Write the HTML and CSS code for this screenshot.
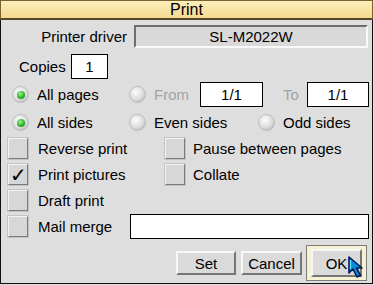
FILE: index.html
```html
<!DOCTYPE html>
<html>
<head>
  <title>Print</title>
  <link rel="stylesheet" href="styles.css">
</head>
<body>

  <div class="window">
    <div class="titlebar">Print</div>

    <div class="content">
      <div class="row driver-row">
        <span class="driver-label">Printer driver</span>
        <div class="driver-field">SL-M2022W</div>
      </div>

      <div class="row copies-row">
        <span class="copies-label">Copies</span>
        <div class="writable copies-box">1</div>
      </div>

      <div class="row radio-row">
        <div class="cell c1"><span class="radio on"></span>All pages</div>
        <div class="cell c2-pages"><span class="radio"></span><span class="faded">From</span></div>
        <div class="writable range-box">1/1</div>
        <div class="cell to-cell"><span class="faded">To</span></div>
        <div class="writable range-box to-box">1/1</div>
      </div>

      <div class="row radio-row">
        <div class="cell c1"><span class="radio on"></span>All sides</div>
        <div class="cell c2-sides"><span class="radio"></span>Even sides</div>
        <div class="cell"><span class="radio"></span>Odd sides</div>
      </div>

      <div class="row check-row">
        <div class="cell k1"><span class="check"></span>Reverse print</div>
        <div class="cell k2"><span class="check"></span>Pause between pages</div>
      </div>
      <div class="row check-row">
        <div class="cell k1"><span class="check ticked">✓</span>Print pictures</div>
        <div class="cell k2"><span class="check"></span>Collate</div>
      </div>
      <div class="row check-row">
        <div class="cell k1"><span class="check"></span>Draft print</div>
      </div>
      <div class="row check-row">
        <div class="cell k1 merge-cell"><span class="check"></span>Mail merge</div>
        <div class="writable merge-box"></div>
      </div>

      <div class="row button-row">
        <button class="btn set-btn">Set</button>
        <button class="btn cancel-btn">Cancel</button>
        <div class="default-ring">
          <button class="btn ok-btn">OK</button>
        </div>
      </div>
    </div>

    <svg class="pointer" width="18" height="24" viewBox="0 0 18 24">
      <polygon points="2,1 2,17 6,13 10,21 13.5,19.5 9.5,12 15,12" fill="#0a8fd6" stroke="#001a5c" stroke-width="1.6" stroke-linejoin="round"/>
      <polyline points="3.5,4 3.5,13" stroke="#6fe0ff" stroke-width="1.2"/>
    </svg>
  </div>

</body>
</html>
```

FILE: styles.css
```css
body {
  margin: 0;
  font-family: "Liberation Sans", Arial, sans-serif;
  font-size: 15px;
  color: #000;
  background: #dcdcdc;
}
.window {
  position: relative;
  width: 373px;
  height: 284px;
  box-sizing: border-box;
  border: 1px solid #111;
  border-top: none;
  background: #dedede;
}
.titlebar {
  height: 17px;
  margin: 0 -1px;
  border: 1px solid #7a6330;
  border-bottom: 2px solid #55472a;
  background: linear-gradient(#fdeebb, #f6da90);
  text-align: center;
  line-height: 18px;
  font-size: 16px;
}
.content {
  display: flex;
  flex-direction: column;
}
.row {
  display: flex;
  align-items: center;
}
.cell {
  display: flex;
  align-items: center;
  white-space: nowrap;
}
.writable {
  box-sizing: border-box;
  height: 25px;
  background: #fff;
  border: 1px solid #000;
  display: flex;
  align-items: center;
  justify-content: center;
}

/* printer driver */
.driver-row {
  margin-top: 5px;
  height: 23px;
}
.driver-label {
  width: 126px;
  text-align: right;
  margin-right: 7px;
}
.driver-field {
  box-sizing: border-box;
  width: 234px;
  height: 23px;
  border: 2px solid #fafafa;
  border-top-color: #6e6e6e;
  border-left-color: #6e6e6e;
  background: #d9d9d9;
  text-align: center;
  line-height: 19px;
}

/* copies */
.copies-row {
  margin-top: 6px;
  height: 25px;
  padding-left: 18px;
}
.copies-label {
  width: 52px;
}
.copies-box {
  width: 37px;
}

/* radios */
.radio-row {
  margin-top: 3px;
  height: 25px;
  padding-left: 11px;
}
.radio {
  position: relative;
  box-sizing: border-box;
  width: 17px;
  height: 17px;
  border-radius: 50%;
  margin-right: 8px;
  border: 1px solid #bcbcbc;
  background: radial-gradient(circle at 40% 35%, #fdfdfd 0%, #dcdcdc 55%, #a2a2a2 100%);
}
.radio.on::after {
  content: "";
  position: absolute;
  left: 3.5px;
  top: 3.5px;
  width: 8px;
  height: 8px;
  border-radius: 50%;
  background: radial-gradient(circle at 40% 35%, #9cf58a 0%, #2db52d 55%, #177017 100%);
}
.c1 {
  width: 117px;
}
.c2-pages {
  width: 71px;
}
.c2-sides {
  width: 129px;
}
.c2-pages .radio,
.c2-sides .radio,
.c2-sides + .cell .radio {
  margin-right: 8px;
}
.faded {
  color: #a3a3a3;
}
.range-box {
  width: 63px;
}
.to-cell {
  margin-left: 20px;
  width: 24px;
}
.to-box {
  width: 62px;
}

/* checkboxes */
.check-row {
  height: 26px;
  padding-left: 7px;
}
.check {
  box-sizing: border-box;
  width: 20px;
  height: 21px;
  margin-right: 10px;
  border: 1px solid #7a7a7a;
  border-top-color: #f2f2f2;
  border-left-color: #f2f2f2;
  background: #d7d7d7;
  box-shadow: 0 0 0 1px #c4c4c4;
  text-align: center;
  line-height: 21px;
  font-size: 20px;
}
.k1 {
  width: 157px;
}
.k2 .check {
  margin-right: 8px;
}
.merge-cell {
  width: 122px;
}
.merge-box {
  width: 239px;
}

/* buttons */
.button-row {
  margin-top: 6px;
  justify-content: flex-end;
  padding-right: 5px;
}
.btn {
  box-sizing: border-box;
  height: 24px;
  padding: 0;
  font-family: inherit;
  font-size: 15px;
  color: #000;
  background: #dadada;
  border: 2px solid #767676;
  border-top-color: #f7f7f7;
  border-left-color: #f7f7f7;
}
.set-btn {
  width: 60px;
  margin-right: 5px;
}
.cancel-btn {
  width: 61px;
  margin-right: 4px;
}
.default-ring {
  box-sizing: border-box;
  width: 61px;
  height: 36px;
  padding: 3px 4px;
  border: 1px solid #7c7c7c;
  background: #f5f1d2;
}
.ok-btn {
  width: 51px;
  height: 28px;
}

.pointer {
  position: absolute;
  left: 346px;
  top: 256px;
}
```
